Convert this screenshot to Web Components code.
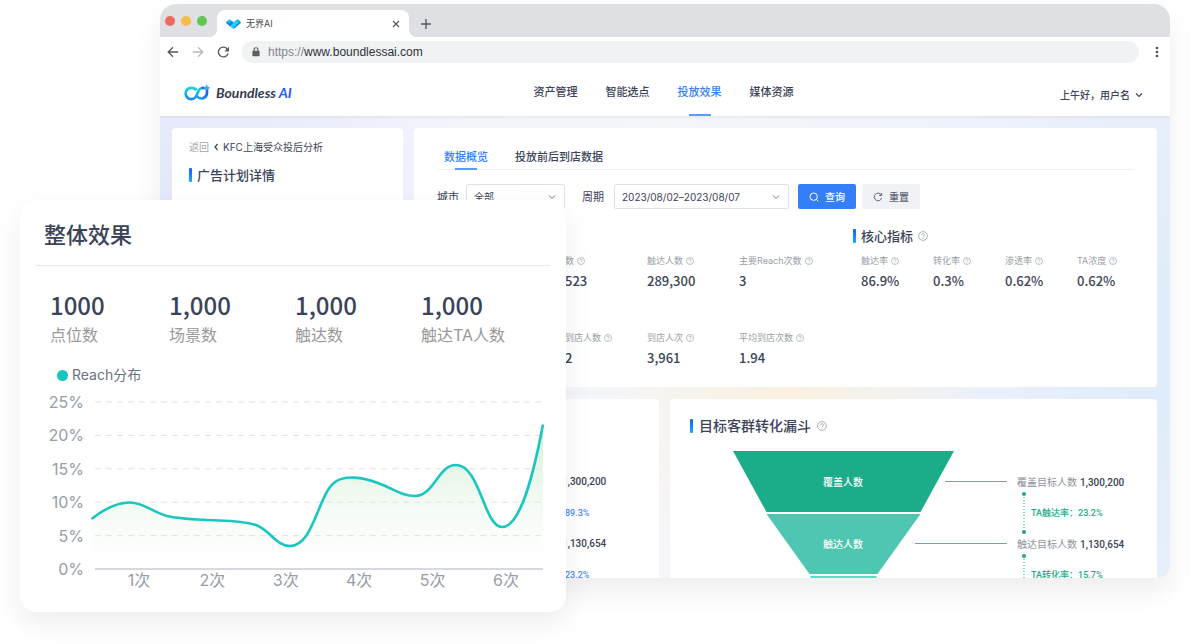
<!DOCTYPE html>
<html lang="zh-CN">
<head>
<meta charset="utf-8">
<title>无界AI</title>
<style>
  html, body { margin: 0; min-height: 100%; background: #fff; }
  body {
    font-family: Inter, "Noto Sans CJK SC", sans-serif;
    font-size: 11px;
    line-height: 14px;
    color: #3b4358;
    --ink: #3b4358;
    --muted: #999eaa;
    --blue: #347ff8;
    --green: #1bad89;
    --digits: "Noto Sans CJK SC", sans-serif;
  }
</style>
</head>
<body>
<page-stage>
  <browser-window>
    <browser-tabs slot="chrome"></browser-tabs>
    <address-bar slot="chrome"></address-bar>
    <app-header></app-header>
    <dash-layout>
      <side-panel slot="side"></side-panel>
      <overview-panel></overview-panel>
      <lower-panels></lower-panels>
    </dash-layout>
  </browser-window>
  <effect-card slot="overlay">
    <big-stat value="1000">点位数</big-stat>
    <big-stat value="1,000">场景数</big-stat>
    <big-stat value="1,000">触达数</big-stat>
    <big-stat value="1,000">触达TA人数</big-stat>
    <reach-chart slot="chart"></reach-chart>
  </effect-card>
</page-stage>

<script>
const RESET = `
  *, *::before, *::after { box-sizing: border-box; }
  :host { display: block; box-sizing: border-box; }
  svg { display: block; flex: none; }
  a { color: inherit; text-decoration: none; }
  button, select, input { font: inherit; color: inherit; margin: 0; border: 0; padding: 0; background: none; }
  h1, h2, p, ul, dl, dd, dt { margin: 0; padding: 0; font: inherit; }
  ul { list-style: none; }
`;
function element(name, css, html) {
  customElements.define(name, class extends HTMLElement {
    constructor() {
      super();
      this.attachShadow({ mode: "open" });
    }
    connectedCallback() {
      const body = typeof html === "function" ? html(this) : html;
      this.shadowRoot.innerHTML = `<style>${RESET}${css}</style>${body}`;
    }
  });
}

element("page-stage", `
  :host { position: relative; min-height: 100vh; padding: 4px 20px 66px 160px; }
  .overlay { position: absolute; left: 20px; top: 200px; width: 46%; max-width: 546px; }
`, `<slot></slot><div class="overlay"><slot name="overlay"></slot></div>`);

element("browser-window", `
  :host {
    height: calc(100vh - 70px); overflow: hidden; background: #fff;
    border-radius: 16px 16px 12px 12px;
    box-shadow: 0 14px 28px rgba(0, 0, 0, .07);
    display: flex; flex-direction: column;
  }
`, `<slot name="chrome"></slot><slot></slot>`);

element("browser-tabs", `
  :host { display: flex; flex: none; height: 33px; background: #dee0e4; padding-left: 5px; align-items: flex-end; }
  .lights { display: flex; gap: 6px; height: 33px; align-items: center; }
  .lights i { width: 10px; height: 10px; border-radius: 50%; }
  .tab {
    position: relative; display: flex; align-items: center; gap: 5px; height: 27px; width: 192px;
    margin-left: 10px; padding: 0 9px; background: #fff; border-radius: 8px 8px 0 0;
    font-size: 9px; color: #45494f;
  }
  .tab::before, .tab::after { content: ""; position: absolute; bottom: 0; width: 8px; height: 8px; }
  .tab::before { right: 100%; background: radial-gradient(circle at 0 0, transparent 8px, #fff 8px); }
  .tab::after { left: 100%; background: radial-gradient(circle at 100% 0, transparent 8px, #fff 8px); }
  .tab span { flex: 1; }
  button { display: flex; }
  .new { margin-left: 12px; height: 27px; align-items: center; }
`, `
  <div class="lights"><i style="background:#ed6a5e"></i><i style="background:#f5bd4f"></i><i style="background:#61c454"></i></div>
  <div class="tab">
    <svg width="15" height="10" viewBox="0 0 15 10">
      <path d="M.6 2.800 2.800.8q.8-.6 1.600 0L7.500 3.600 10.600.8q.8-.6 1.600 0l2.200 2q.6.7 0 1.400L8.700 9.300q-1.200.8-2.400 0L.6 4.200q-.6-.7 0-1.400z" fill="#12bdf3"/>
      <path d="M.6 2.800q-.6.7 0 1.400L4 7.200 7.500 3.600 5.800 2 3.300 4.600z" fill="#1a78f5"/>
      <path d="M12.200.8l2.200 2q.6.7 0 1.400L8.700 9.300 7 7z" fill="#2c86f8"/>
      <path d="M10.600.8 7.500 3.600 4.500 6.700 7.200 9.200 13 3.200z" fill="#1fd0e6"/>
    </svg>
    <span>无界AI</span>
    <button aria-label="关闭标签页"><svg width="8" height="8" viewBox="0 0 8 8"><path d="M1 1l6 6M7 1 1 7" stroke="#55585d" stroke-width="1.2"/></svg></button>
  </div>
  <button class="new" aria-label="新标签页"><svg width="10" height="10" viewBox="0 0 10 10"><path d="M5 0v10M0 5h10" stroke="#55585d" stroke-width="1.4"/></svg></button>
`);

element("address-bar", `
  :host { display: flex; flex: none; align-items: center; height: 30px; padding: 0 9px 0 7px; }
  nav { display: flex; gap: 13px; width: 75px; }
  nav button { display: flex; }
  .url { flex: 1; display: flex; align-items: center; gap: 7px; height: 22px; padding-left: 9px; background: #f0f2f4; border-radius: 11px; }
  .url a { font: 12px/16px "Liberation Sans", sans-serif; color: #84878c; }
  .url b { font-weight: 400; color: #2f3237; }
  .more { margin-left: 14px; display: flex; }
`, `
  <nav>
    <button aria-label="后退"><svg width="12" height="12" viewBox="0 0 12 12" fill="none" stroke="#55585d" stroke-width="1.3"><path d="M11.2 6H1.4M6 1.2 1.2 6 6 10.8"/></svg></button>
    <button aria-label="前进"><svg width="12" height="12" viewBox="0 0 12 12" fill="none" stroke="#b7babe" stroke-width="1.3"><path d="M.8 6h9.8M6 1.2 10.8 6 6 10.8"/></svg></button>
    <button aria-label="刷新"><svg width="12" height="12" viewBox="0 0 12 12"><path d="M10.400 3.300A4.900 4.900 0 1 0 11 7.400" fill="none" stroke="#55585d" stroke-width="1.4"/><path d="M12 .8v4.600H7.400z" fill="#55585d"/></svg></button>
  </nav>
  <div class="url">
    <svg width="10" height="10" viewBox="0 0 10 10"><rect x="1.4" y="3.8" width="7.2" height="5.4" rx=".8" fill="#5b5e63"/><path d="M3 4V2.8a2 2 0 0 1 4 0V4" fill="none" stroke="#5b5e63" stroke-width="1.1"/></svg>
    <a href="#">https://<b>www.boundlessai.com</b></a>
  </div>
  <button class="more" aria-label="更多"><svg width="8" height="12" viewBox="0 0 8 12" fill="#4c4f54"><circle cx="4" cy="2" r="1.3"/><circle cx="4" cy="6" r="1.3"/><circle cx="4" cy="10" r="1.3"/></svg></button>
`);

element("app-header", `
  :host { position: relative; z-index: 1; flex: none; display: grid; grid-template-columns: 1fr auto 1fr; height: 49px; padding: 0 27px 0 24px; background: #fff; box-shadow: 0 1px 3px rgba(60, 70, 110, .1); }
  .brand { display: flex; align-items: center; gap: 6px; padding-top: 3px; font: italic 700 14px/20px Lato, sans-serif; color: #343c52; }
  .brand em { color: #2458fb; }
  nav { display: flex; gap: 28px; font-weight: 500; }
  nav a { display: flex; justify-content: center; align-items: center; position: relative; }
  nav a[aria-current] { color: var(--blue); }
  nav a[aria-current]::after { content: ""; position: absolute; bottom: 0; width: 22px; height: 2px; background: #5b9bfb; }
  .user { justify-self: end; display: flex; align-items: center; gap: 5px; padding-top: 6px; font-size: 10px; font-weight: 500; }
`, `
  <a class="brand" href="#">
    <svg width="26" height="18" viewBox="0 0 26 18" fill="none" stroke-width="2.6">
      <defs>
        <linearGradient id="l" x1="0" y1="0" x2="0" y2="1"><stop stop-color="#15d3da"/><stop offset="1" stop-color="#1b8cf6"/></linearGradient>
        <linearGradient id="r" x1="0" y1="1" x2="1" y2="0"><stop stop-color="#20a4f5"/><stop offset="1" stop-color="#1c4df2"/></linearGradient>
      </defs>
      <path d="M12.600 6.200C11.300 4.500 9.200 3.900 7.300 3.900a5.600 5.600 0 1 0 4.300 9.200C13.600 10.800 13.800 4.100 18.600 3.900" stroke="url(#l)"/>
      <path d="M13 12.300a5.600 5.600 0 0 0 10-3.200V4.600M17.600 4H22" stroke="url(#r)"/>
      <path d="M19.800 3.900h5.600M22.700 1v5.600" stroke="#1fb4ee" stroke-width="1.600"/>
    </svg>
    <span>Boundless <em>AI</em></span>
  </a>
  <nav><a href="#">资产管理</a><a href="#">智能选点</a><a href="#" aria-current="page">投放效果</a><a href="#">媒体资源</a></nav>
  <a class="user" href="#">上午好，用户名<svg width="8" height="8" viewBox="0 0 8 8" fill="none" stroke="#3b4358" stroke-width="1.100"><path d="M1 2.500 4 5.500 7 2.500"/></svg></a>
`);

element("dash-layout", `
  :host {
    flex: 1; min-height: 0; overflow: hidden; display: grid; grid-template-columns: 231px minmax(0, 1fr); gap: 11px; padding: 12px 13px 0 12px;
    background:
      radial-gradient(circle 190px at 62% 62%, #faf0de, rgba(250, 240, 222, 0)),
      radial-gradient(circle 300px at 103% 50%, #deebfb, rgba(222, 235, 251, 0)),
      radial-gradient(circle 320px at 0 34%, #dfe4fa, rgba(223, 228, 250, 0)),
      linear-gradient(90deg, #f0f2fc, #f5f6fa 50%, #eaf0fb);
  }
  main { display: flex; flex-direction: column; gap: 12px; }
`, `<slot name="side"></slot><main><slot></slot></main>`);

element("section-title", `
  :host { display: flex; align-items: center; gap: 5px; height: 14px; font-size: 13px; font-weight: 500; }
  :host([large]) { font-size: 14px; gap: 6px; }
  :host::before { content: ""; flex: none; width: 3px; height: 14px; border-radius: 1px; background: linear-gradient(#0d63fb, #12adfb); }
  h2 { line-height: 14px; }
`, el => `<h2><slot></slot></h2>${el.hasAttribute("help") ? "<help-icon></help-icon>" : ""}`);

element("help-icon", `
  :host { flex: none; width: 8px; height: 8px; }
  :host(:not([small])) { width: 10px; height: 10px; }
  svg { width: 100%; height: 100%; }
`, `<svg viewBox="0 0 10 10" fill="none" stroke="#a3a7b0" stroke-width=".900"><circle cx="5" cy="5" r="4.400"/><path d="M3.600 4.100a1.400 1.400 0 1 1 2.100 1.200Q5 5.700 5 6.200M5 7v.900"/></svg>`);

element("side-panel", `
  :host { background: #fff; border-radius: 4px; padding: 12px 17px; }
  nav { display: flex; align-items: center; gap: 5px; font-size: 10px; }
  nav a:first-child { color: #a3a7b0; }
  section-title { margin-top: 14px; }
`, `
  <nav><a href="#">返回</a><svg width="4" height="8" viewBox="0 0 4 8" fill="none" stroke="#3b4358" stroke-width="1.200"><path d="M3.500 1 1 4l2.500 3"/></svg><a href="#">KFC上海受众投后分析</a></nav>
  <section-title>广告计划详情</section-title>
`);

element("filter-select", `
  :host { display: flex; align-items: center; }
  label { font-size: 11px; }
  .box { position: relative; margin-left: 7px; width: 99px; }
  :host([wide]) .box { width: 175px; margin-left: 10px; }
  select { appearance: none; width: 100%; height: 25px; padding: 0 7px; border: 1px solid #dfe1e6; border-radius: 2px; background: #fff; font-size: 10px; }
  svg { position: absolute; right: 9px; top: 9px; pointer-events: none; }
`, el => `<label for="s">${el.getAttribute("label")}</label>
  <span class="box"><select id="s"><option>${el.getAttribute("value")}</option></select>
  <svg width="8" height="8" viewBox="0 0 8 8" fill="none" stroke="#6b7182"><path d="M1 2.500 4 5.500 7 2.500"/></svg></span>`);

element("metric-item", `
  dt { display: flex; align-items: center; gap: 3px; height: 12px; font-size: 9px; line-height: 12px; color: var(--muted); white-space: nowrap; }
  dd { margin-top: 5px; font: 500 13px/18px var(--digits); }
`, el => `<dl><dt><slot></slot><help-icon small></help-icon></dt><dd>${el.getAttribute("value")}</dd></dl>`);

element("overview-panel", `
  :host { background: #fff; border-radius: 4px; padding: 0 23px 20px; }
  nav { display: flex; gap: 27px; height: 42px; padding: 0 7px; border-bottom: 1px solid #f0f1f4; font-weight: 500; }
  nav a { position: relative; display: flex; justify-content: center; padding-top: 22px; }
  nav a[aria-current] { color: var(--blue); }
  nav a[aria-current]::after { content: ""; position: absolute; bottom: -1px; width: 22px; height: 2px; background: #5b9bfb; }
  form { display: flex; align-items: center; margin-top: 14px; }
  form filter-select + filter-select { margin-left: 17px; }
  button { display: flex; align-items: center; justify-content: center; gap: 6px; width: 58px; height: 25px; border-radius: 2px; font-size: 10px; font-weight: 500; background: #f0f2f5; margin-left: 6px; color: #5d6475; }
  button.primary { background: var(--blue); color: #fff; margin-left: 9px; }
  .groups { display: flex; margin-top: 20px; }
  .reach { flex: 1; display: grid; grid-template-columns: 82fr 92fr 114fr; row-gap: 42px; padding: 26px 0 0 128px; }
  .core { width: 281px; }
  .core div { display: grid; grid-template-columns: repeat(4, 72px); margin-top: 12px; padding-left: 8px; }
`, `
  <nav><a href="#" aria-current="page">数据概览</a><a href="#">投放前后到店数据</a></nav>
  <form onsubmit="return false">
    <filter-select label="城市" value="全部"></filter-select>
    <filter-select wide label="周期" value="2023/08/02–2023/08/07"></filter-select>
    <button class="primary"><svg width="10" height="10" viewBox="0 0 10 10" fill="none" stroke="#fff"><circle cx="4.700" cy="4.700" r="3.700"/><path d="m7.300 7.300 2 2"/></svg>查询</button>
    <button type="reset"><svg width="10" height="10" viewBox="0 0 10 10" fill="none" stroke="#5d6475"><path d="M8.200 2.800A3.800 3.800 0 1 0 8.700 6M8.700 1v2.500H6.200"/></svg>重置</button>
  </form>
  <div class="groups">
    <div class="reach">
      <metric-item value="523">数</metric-item>
      <metric-item value="289,300">触达人数</metric-item>
      <metric-item value="3">主要Reach次数</metric-item>
      <metric-item value="2">到店人数</metric-item>
      <metric-item value="3,961">到店人次</metric-item>
      <metric-item value="1.94">平均到店次数</metric-item>
    </div>
    <div class="core">
      <section-title help>核心指标</section-title>
      <div>
        <metric-item value="86.9%">触达率</metric-item>
        <metric-item value="0.3%">转化率</metric-item>
        <metric-item value="0.62%">渗透率</metric-item>
        <metric-item value="0.62%">TA浓度</metric-item>
      </div>
    </div>
  </div>
`);

element("lower-panels", `
  :host { display: grid; grid-template-columns: 245fr 487fr; gap: 11px; }
  section { background: #fff; border-radius: 4px; min-height: 240px; }
  .values { padding: 76px 0 0 148px; font: 500 10px/14px Roboto, sans-serif; }
  .values li { height: 31px; }
  .values li:nth-child(even) { padding-left: 3px; font-size: 9px; color: #4c8cf5; }
  .funnel { padding: 20px; }
  funnel-chart { margin-top: 18px; }
`, `
  <section><ul class="values"><li>1,300,200</li><li>89.3%</li><li>1,130,654</li><li>23.2%</li></ul></section>
  <section class="funnel"><section-title large help>目标客群转化漏斗</section-title><funnel-chart></funnel-chart></section>
`);

element("funnel-chart", `
  :host { display: flex; gap: 10px; padding-left: 43px; }
  text { font: 500 10px "Noto Sans CJK SC", sans-serif; fill: #fff; text-anchor: middle; }
  ul { padding-top: 24px; white-space: nowrap; font-size: 10px; }
  .name { color: #8d92a0; height: 14px; }
  .name b { margin-left: 3px; font: 500 10px/14px Roboto, sans-serif; color: var(--ink); }
  .rate { display: flex; align-items: center; gap: 4px; height: 48px; line-height: 12px; font-family: Roboto, "Noto Sans CJK SC", sans-serif; font-size: 9px; font-weight: 500; color: var(--green); }
`, () => {
  const link = `<svg width="10" height="44" viewBox="0 0 10 44"><path d="M7 3v38" stroke="#1bad89" stroke-dasharray="1 2"/><circle cx="7" cy="3" r="2" fill="#1bad89"/><circle cx="7" cy="41" r="2" fill="#1bad89"/></svg>`;
  const step = (name, n, rate, pct) => `<li><p class="name">${name}<b>${n}</b></p><p class="rate">${link}${rate}：${pct}</p></li>`;
  return `
  <svg width="274" height="170" viewBox="0 0 274 170">
    <path d="M0 0h221L187.500 61h-154z" fill="#1bad89"/>
    <path d="M33.500 63h154L144.500 123h-68z" fill="#4fc6b1"/>
    <path d="M77 125h67l-20 45H97z" fill="#5bdcc5"/>
    <path d="M212 30.500h62M182 92.500h92" stroke="#4fb9a0"/>
    <text x="110" y="35">覆盖人数</text><text x="110" y="97">触达人数</text>
  </svg>
  <ul>${step("覆盖目标人数", "1,300,200", "TA触达率", "23.2%")}${step("触达目标人数", "1,130,654", "TA转化率", "15.7%")}</ul>`;
});

element("effect-card", `
  :host { background: #fff; border-radius: 16px; padding: 0 16px 22px; box-shadow: 0 12px 28px rgba(0, 0, 0, .07); }
  h1 { padding: 19px 8px 14px; font-size: 22px; line-height: 32px; font-weight: 500; border-bottom: 1px solid #e6e8eb; }
  .stats { display: grid; grid-template-columns: 119fr 126fr 126fr 129fr; padding: 23px 0 0 14px; }
`, `<h1>整体效果</h1><div class="stats"><slot></slot></div><slot name="chart"></slot>`);

element("big-stat", `
  b { display: block; font: 500 24px/32px var(--digits); }
  span { display: block; margin-top: 2px; font-size: 16px; line-height: 24px; color: #999; white-space: nowrap; }
`, el => `<b>${el.getAttribute("value")}</b><span><slot></slot></span>`);

element("reach-chart", `
  :host { padding-top: 18px; }
  .legend { display: flex; align-items: center; gap: 4px; padding-left: 21px; font-size: 14px; line-height: 20px; color: #6b7280; }
  .legend i { width: 11px; height: 11px; border-radius: 50%; background: #15c5c0; }
  svg { width: 100%; height: auto; }
  text { font: 16px Inter, "Noto Sans CJK SC", sans-serif; fill: #959daa; }
  .y { text-anchor: end; }
  .x { text-anchor: middle; }
`, () => {
  const top = 402, gap = 33.4;
  let g = "";
  [25, 20, 15, 10, 5, 0].forEach((v, i) => {
    const y = top + gap * i;
    g += `<text class="y" x="84" y="${y + 6}">${v}%</text>`;
    g += v ? `<path d="M95 ${y}H543" stroke="#dfe2e8" stroke-dasharray="6 5"/>` : `<path d="M95 ${y}H543" stroke="#c9ced6" stroke-width="1.500"/>`;
  });
  for (let i = 0; i < 6; i++) g += `<text class="x" x="${139 + 73.4 * i}" y="586">${i + 1}次</text>`;
  const line = "M91.500 519C104 509 116 502.500 130 502.500C144 502.500 152 512 167 516C180 519 190 519 204 519.800C222 521 240 520 256 525C270 530 276 546 290 546C314 546 318 494 335 482C345 475 362 477 378 483C394 489 402 496 415 496C434 496 438 465 456 465C480 465 484 527 502 527C521 527 534 472 543 424.500";
  return `
  <div class="legend"><i></i>Reach分布</div>
  <svg viewBox="36 385 514 205" role="img" aria-label="Reach分布">
    <defs><linearGradient id="a" x1="0" y1="0" x2="0" y2="1"><stop stop-color="#d3edd3"/><stop offset="1" stop-color="#f4fbf4" stop-opacity="0"/></linearGradient></defs>
    <path d="${line}V569H91.500Z" fill="url(#a)"/>
    ${g}
    <path d="${line}" fill="none" stroke="#19c6c0" stroke-width="2.600"/>
  </svg>`;
});
</script>
</body>
</html>
